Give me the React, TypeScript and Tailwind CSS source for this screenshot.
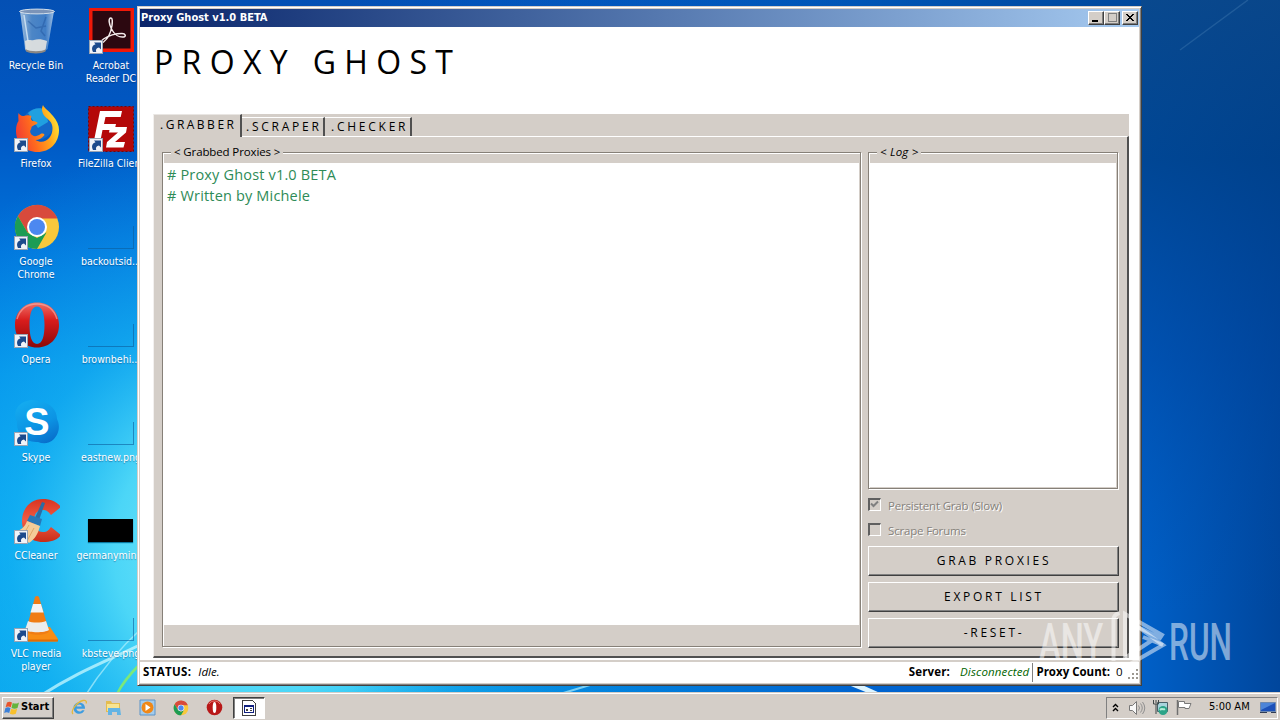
import type { ReactNode } from "react"

const RAISED = "border border-t-white border-l-white border-r-[#404040] border-b-[#404040] shadow-[inset_-1px_-1px_0_#808080]"

/* ---------- Desktop icons ---------- */

function Shortcut() {
  return (
    <g>
      <rect x="2.500" y="33.500" width="13" height="13" fill="#f0f3f8" stroke="#9aa4b4" />
      <path d="M6 45c-2-4-.5-7 2.500-7.800L7 35.500h7v7l-2-2c-2.500.6-3.600 2-2.800 4.500z" fill="#1c4a8c" />
    </g>
  )
}

function Icon({ children, shortcut = true }: { children: ReactNode; shortcut?: boolean }) {
  return (
    <svg width="48" height="48" viewBox="0 0 48 48" className="shrink-0">
      {children}
      {shortcut && <Shortcut />}
    </svg>
  )
}

function RecycleBin() {
  return (
    <Icon shortcut={false}>
      <defs>
        <linearGradient id="bin" x1="0" x2="1" y1="0" y2="0">
          <stop offset="0" stopColor="#b4cce4" stopOpacity="0.9" />
          <stop offset="0.35" stopColor="#6c9ccc" stopOpacity="0.7" />
          <stop offset="0.75" stopColor="#5a90cc" stopOpacity="0.7" />
          <stop offset="1" stopColor="#b4d0ec" stopOpacity="0.9" />
        </linearGradient>
      </defs>
      <path d="M8 4l5 38c.5 3 21 3 22.500 0L42 4z" fill="url(#bin)" />
      <path d="M13 34c3-2 6 0 9-1s8-1 13 1l-1.500 9c-3 3-18 3-20 0z" fill="#e6e4e0" opacity="0.9" />
      <path d="M13.500 42c4 3 17 3 20.500 0l-.5 2.500c-4 2.500-15 2.500-19.500 0z" fill="#8a8784" />
      <path d="M16 14l8 7 10-2M34 10l-5 14 4 5" fill="none" stroke="#2458a0" strokeWidth="1.500" opacity="0.5" />
      <path d="M12 8l4 26" stroke="#dcecf8" strokeWidth="1.500" opacity="0.8" />
      <ellipse cx="25" cy="4.500" rx="17.500" ry="2.400" fill="#7c94b8" stroke="#d4e0ec" />
    </Icon>
  )
}

function Acrobat() {
  return (
    <Icon>
      <rect x="2" y="1" width="45" height="44" fill="#f01808" />
      <rect x="5.500" y="4" width="38" height="37.500" fill="#2c0810" />
      <path
        d="M24 11c-3 0-2 6 .5 11 3 6 8 8.500 12 8 3-.5 2-3.500-1.500-3.500-6 0-14 2.500-18.500 5.500-3.500 2.500-3 5 0 3 4-3 7.500-10 8.500-16.500.5-4 .5-7.500-1-7.500z"
        fill="none"
        stroke="#f4ecec"
        strokeWidth="1.500"
      />
    </Icon>
  )
}

function Firefox() {
  return (
    <Icon>
      <defs>
        <linearGradient id="fx" x1="0" x2="1" y1="0.6" y2="0.3">
          <stop offset="0" stopColor="#f03c34" />
          <stop offset="0.35" stopColor="#ff6a1e" />
          <stop offset="0.7" stopColor="#ffa81c" />
          <stop offset="1" stopColor="#ffe838" />
        </linearGradient>
      </defs>
      <circle cx="26" cy="19" r="15.500" fill="#1468c8" />
      <path d="M16 8c5-5 12-6 18-3l2 12-10 6z" fill="#20a0e0" />
      <path
        d="M31 0c1 3 6 6 10 11s6 9 6 14c0 13-9 22-21.500 22S4 38 4 26c0-5 1-8 2.500-10 0-3-.5-5 0-8 2 3 4 3 5 3 3-1 6-1 8 0-1 2-1 4 1 5 2 0 5 1 5 2s-4 2-6 4c0 3-2 3-1 6 2 4 6 4 10 1 2-1 4 0 4 1-2 3-6 5-9 5 8 5 17-1 17-12 0-6-4-8-8-12-3-4-3-8-1.500-11z"
        fill="url(#fx)"
      />
    </Icon>
  )
}

function FileZilla() {
  return (
    <Icon>
      <rect x="1.500" y="1.500" width="45" height="45" fill="#b40808" stroke="#7c0404" strokeDasharray="2 2" />
      <path d="M13 6h22l-1.300 6H18.500l-1.500 7h12L27.600 25H15.500L13 38H6.500z" fill="#fff" />
      <path d="M23 22h17l-1 5.500L28 37h10l-1.500 5.500H19l1-5.500 11-9.500h-9z" fill="#fff" />
    </Icon>
  )
}

function ChromeShape() {
  return (
    <g>
      <circle cx="25" cy="24" r="22" fill="#f8c83c" />
      <path d="M5.900 13A22 22 0 0 1 45.500 15.500H25L15.500 29.500z" fill="#d84a3c" />
      <path d="M5.900 13A22 22 0 0 0 25 46l9.500-16.500-9.500 5.500-9.500-5.500z" fill="#1c9c54" />
      <circle cx="25" cy="24" r="10" fill="#fff" />
      <circle cx="25" cy="24" r="8" fill="#4c88f0" />
    </g>
  )
}

function OperaShape() {
  return (
    <g>
      <defs>
        <linearGradient id="op" x1="0" x2="0" y1="0" y2="1">
          <stop offset="0" stopColor="#f07068" />
          <stop offset="0.4" stopColor="#d81c1c" />
          <stop offset="1" stopColor="#8c0808" />
        </linearGradient>
      </defs>
      <path
        fillRule="evenodd"
        d="M25 1.500C38 1.500 47 11 47 24S38 46.500 25 46.500 3 37 3 24 12 1.500 25 1.500zM25 5.500c-5.500 0-7.500 8-7.500 18.500S19.500 43 25 43s7.500-8.500 7.500-19S30.500 5.500 25 5.500z"
        fill="url(#op)"
      />
      <path d="M5 18C8 8 15 3 25 3s17 5 20 15" fill="none" stroke="#f8b4ac" strokeWidth="1.500" opacity="0.6" />
    </g>
  )
}

function Skype() {
  return (
    <Icon>
      <defs>
        <linearGradient id="sk" x1="0.2" x2="0.7" y1="0" y2="1">
          <stop offset="0" stopColor="#14acf0" />
          <stop offset="0.6" stopColor="#0c94e4" />
          <stop offset="1" stopColor="#0870cc" />
        </linearGradient>
      </defs>
      <path d="M15 2c5-2 10-1 13 1 10 0 17 8 17 17 4 8 1 16-3 20-5 5-11 5-16 3C12 44 4 34 5 23 0 13 6 4 15 2z" fill="url(#sk)" />
      <text x="25" y="36" fontSize="38" fontWeight="700" fill="#fff" textAnchor="middle" fontFamily="Liberation Sans, sans-serif">
        S
      </text>
    </Icon>
  )
}

function CCleaner() {
  return (
    <Icon>
      <defs>
        <linearGradient id="cc" x1="0" x2="0" y1="0" y2="1">
          <stop offset="0" stopColor="#d83420" />
          <stop offset="0.5" stopColor="#f05c44" />
          <stop offset="1" stopColor="#c82c18" />
        </linearGradient>
      </defs>
      <path
        d="M49 10l-10 8c-3-4-5-5-8-5-7 0-9 5-9 11s3 11 9 11c4 0 5-1 8-5l10 8c-4 5-10 7-18 7C18 45 10 36 10 24S18 2 31 2c8 0 14 3 18 8z"
        fill="url(#cc)"
      />
      <path d="M30 5l3 1-6 17-4-2z" fill="#2c6ca4" />
      <path d="M18 18l12 4-2 7-13-5z" fill="#2878b8" />
      <path d="M15 24l13 5c-2 8-5 13-11 17l-4-4-6 2-4-9c6-2 10-5 12-11z" fill="#f4cc98" />
      <path d="M17 28l-7 12M22 31l-7 13" stroke="#e0a868" />
    </Icon>
  )
}

function Vlc() {
  return (
    <Icon>
      <path d="M14 32h24l8 12c0 2-1 2.500-2 2.500H10c-2 0-3-1-2-3z" fill="#f88c14" />
      <path d="M10 44.500h36v2H10z" fill="#e06c04" />
      <path d="M23 2c1-1.500 3-1.500 4 0l10 34c-2 5-20 5-23 0z" fill="#f07c14" />
      <path d="M21 9h8l2.500 8.500H18.500z" fill="#f4f4f4" />
      <path d="M16 26c4 2 13 2 18 0l3 9c-4 3-20 3-24 0z" fill="#ececec" />
    </Icon>
  )
}

function Thumb({ black }: { black?: boolean }) {
  return (
    <div className="flex h-12 w-12 shrink-0 items-end pl-px pb-[2px]">
      {black ? (
        <div className="mb-px h-[23px] w-[45px] bg-black shadow-[0_1px_1px_#0878a0]" />
      ) : (
        <div className="h-[23px] w-[46px] border-r border-b border-[#0b5d9c]/60" />
      )}
    </div>
  )
}

function DesktopItem({ label, children }: { label: string; children: ReactNode }) {
  return (
    <div className="flex h-[98px] flex-col items-center pt-[7px]">
      {children}
      <span className="mt-[4px] text-center text-[10.5px] leading-[13px] whitespace-pre text-white [text-shadow:0_1px_1px_rgba(0,30,80,0.4)]">
        {label}
      </span>
    </div>
  )
}

function Wallpaper() {
  return (
    <svg className="absolute inset-0" width="1280" height="720" viewBox="0 0 1280 720">
      <defs>
        <linearGradient id="sky" x1="0" x2="0" y1="0" y2="1">
          <stop offset="0" stopColor="#0450b4" />
          <stop offset="0.18" stopColor="#0058c4" />
          <stop offset="0.35" stopColor="#0074dc" />
          <stop offset="0.52" stopColor="#0090ea" />
          <stop offset="0.75" stopColor="#00a0f0" />
          <stop offset="1" stopColor="#04a4ec" />
        </linearGradient>
        <radialGradient id="glow" gradientUnits="userSpaceOnUse" cx="260" cy="550" r="430">
          <stop offset="0" stopColor="#8cf0fc" />
          <stop offset="0.34" stopColor="#54dcf8" stopOpacity="0.9" />
          <stop offset="0.58" stopColor="#20bcf4" stopOpacity="0.5" />
          <stop offset="1" stopColor="#10a0f0" stopOpacity="0" />
        </radialGradient>
        <linearGradient id="fade" x1="0" x2="1" y1="0" y2="0">
          <stop offset="0" stopColor="#0060cc" stopOpacity="0" />
          <stop offset="0.55" stopColor="#0064d0" />
          <stop offset="0.85" stopColor="#0060c8" />
          <stop offset="1" stopColor="#00469c" />
        </linearGradient>
        <linearGradient id="dim" x1="0" x2="0" y1="0" y2="1">
          <stop offset="0" stopColor="#0a4688" stopOpacity="0.9" />
          <stop offset="0.22" stopColor="#004088" stopOpacity="0.8" />
          <stop offset="0.5" stopColor="#00449c" stopOpacity="0.5" />
          <stop offset="0.85" stopColor="#0050b0" stopOpacity="0" />
        </linearGradient>
        <linearGradient id="top" x1="0" x2="1" y1="0" y2="0">
          <stop offset="0" stopColor="#004ca8" stopOpacity="0" />
          <stop offset="1" stopColor="#00489c" />
        </linearGradient>
      </defs>
      <rect width="1280" height="720" fill="url(#sky)" />
      <rect width="700" height="720" fill="url(#glow)" />
      <rect x="350" width="930" height="720" fill="url(#fade)" />
      <rect x="500" width="641" height="7" fill="url(#top)" />
      <rect x="1141" width="139" height="720" fill="url(#dim)" />
      <path d="M1180 50L1248 0" stroke="#4c84b8" strokeWidth="1.500" opacity="0.35" />
      <path d="M40 696C80 670 110 660 150 640" stroke="#c8f8ff" strokeWidth="3" fill="none" opacity="0.75" />
      <path d="M85 696C100 672 118 650 142 628" stroke="#b0f0fc" strokeWidth="1.500" fill="none" opacity="0.7" />
      <path d="M117 694C123 682 130 674 140 664" stroke="#84ec6c" strokeWidth="2.500" fill="none" opacity="0.9" />
      <path d="M846 684h14l20 9h-12z" fill="#dcf4ff" />
      <path d="M560 694l30-9" stroke="#7cd0f4" strokeWidth="2" />
    </svg>
  )
}

/* ---------- Window ---------- */

function CaptionButton({ children }: { children: ReactNode }) {
  return (
    <div className={`h-[14px] w-4 bg-[#d4cec8] ${RAISED}`}>
      <svg width="14" height="12" viewBox="0 0 14 12" shapeRendering="crispEdges">
        {children}
      </svg>
    </div>
  )
}

function Tab({ label, active }: { label: string; active?: boolean }) {
  return (
    <div
      className={
        active
          ? "h-[23px] w-[89px] border-t border-l border-r-2 border-t-white/50 border-l-white/70 border-r-[#505050] bg-[#d4cec8] pl-[6px] leading-[17px]"
          : "mt-[3px] h-[19px] w-[83px] border-t border-r-2 border-t-white border-r-[#505050] pl-[4px] leading-[15px] last:w-[87px] last:pl-[6px]"
      }
    >
      <span className={active ? "text-[12px] tracking-[2.5px]" : "text-[12px] tracking-[2.75px]"}>{label}</span>
    </div>
  )
}

function GroupBox({ title, children, className }: { title: ReactNode; children?: ReactNode; className: string }) {
  return (
    <div className={`relative border border-[#868078] shadow-[inset_1px_1px_0_#fff,1px_1px_0_#fff] ${className}`}>
      <div className="absolute -top-[9px] left-[8px] h-4 bg-[#d4cec8] px-[3px] text-[11.5px] leading-4 tracking-[-0.12px]">{title}</div>
      {children}
    </div>
  )
}

function Check({ label, checked }: { label: string; checked?: boolean }) {
  return (
    <div className="flex h-[25px] items-start">
      <div className="h-[13px] w-[13px] border-t-2 border-l-2 border-r border-b border-t-[#606060] border-l-[#606060] border-r-white border-b-white">
        {checked && (
          <svg width="9" height="9" viewBox="0 0 9 9">
            <path d="M1 3.500l2.500 2.500L8 1.500" fill="none" stroke="#808080" strokeWidth="2" />
          </svg>
        )}
      </div>
      <span className="ml-[7px] text-[11.5px] leading-[16px] tracking-[-0.18px] text-[#86827c] [text-shadow:1px_1px_0_#fff]">{label}</span>
    </div>
  )
}

function PushButton({ label }: { label: string }) {
  return (
    <button className={`flex h-[30px] w-[251px] items-center justify-center bg-[#d4cec8] pl-px text-[12px] tracking-[2.7px] ${RAISED}`}>
      {label}
    </button>
  )
}

function AppWindow() {
  return (
    <div className="absolute left-[137px] top-[6px] flex h-[680px] w-[1005px] flex-col border border-t-[#d4cec8] border-l-[#d4cec8] border-r-[#404040] border-b-[#404040] bg-[#d4cec8] p-[2px] font-['Open_Sans','Noto_Sans',sans-serif] text-black shadow-[inset_1px_1px_0_#fff,inset_-1px_-1px_0_#808080]">
      {/* Title bar */}
      <div className="flex h-[18px] shrink-0 items-center justify-between bg-linear-to-r from-[#0a246a] to-[#a6caf0] pl-px pr-px">
        <span className="font-['DejaVu_Sans_Condensed','DejaVu_Sans',sans-serif] text-[11px] font-bold text-white">
          Proxy Ghost v1.0 BETA
        </span>
        <div className="flex">
          <CaptionButton>
            <path d="M3 8h6v2H3z" />
          </CaptionButton>
          <CaptionButton>
            <path d="M3.500 1.500h8v8h-8z" fill="none" stroke="#808080" />
            <path d="M3 1h9v1H3z" fill="#808080" />
          </CaptionButton>
          <div className="ml-[2px]">
            <CaptionButton>
              <path d="M3 2h2v1h1v1h2V3h1V2h2v1h-1v1H9v1H8v1h1v1h1v1h1v1H9V8H8V7H6v1H5v1H3V8h1V7h1V6h1V5H5V4H4V3H3z" />
            </CaptionButton>
          </div>
        </div>
      </div>

      <div className="flex min-h-0 flex-1 flex-col bg-white">
        <h1 className="h-[87px] pl-[14px] pt-[11px] text-[32px] leading-[48px] tracking-[8.35px]">PROXY GHOST</h1>

        {/* Tabs */}
        <div className="ml-[13px] h-[544px] w-[976px] bg-[#d4cec8]">
          <div className="relative flex h-[22px]">
            <Tab label=".GRABBER" active />
            <Tab label=".SCRAPER" />
            <Tab label=".CHECKER" />
          </div>
          <div className="flex h-[522px] border-t border-l border-r-2 border-b-2 border-t-white border-l-white/70 border-r-[#505050] border-b-[#505050] pl-[8px] pt-[15px]">
            <GroupBox title="< Grabbed Proxies >" className="h-[495px] w-[699px] pt-[10px]">
              <div className="ml-px mr-px h-[462px] bg-white pl-[3px] text-[14.5px] leading-[21px] tracking-[0.17px] text-[#2e8b57]">
                <p className="pt-px"># Proxy Ghost v1.0 BETA</p>
                <p># Written by Michele</p>
              </div>
            </GroupBox>
            <div className="ml-[7px] flex flex-col">
              <GroupBox title={<i className="tracking-[0.2px]">&lt; Log &gt;</i>} className="h-[337px] w-[250px] pt-[10px]">
                <div className="ml-px mr-px h-[324px] bg-white" />
              </GroupBox>
              <div className="mt-[9px]">
                <Check label="Persistent Grab (Slow)" checked />
                <Check label="Scrape Forums" />
              </div>
              <div className="-mt-[2px] flex flex-col gap-[6px]">
                <PushButton label="GRAB PROXIES" />
                <PushButton label="EXPORT LIST" />
                <PushButton label="-RESET-" />
              </div>
            </div>
          </div>
        </div>

        {/* Status bar */}
        <div className="mt-[2px] flex h-[22px] items-center border-t-2 border-[#d4cec8] pl-[3px] text-[11.5px]">
          <b className="tracking-[0.35px]">STATUS:</b>
          <i className="ml-[7px]">Idle.</i>
          <b className="ml-auto tracking-[0.15px]">Server:</b>
          <i className="ml-[10px] tracking-[0.15px] text-[#006400]">Disconnected</i>
          <span className="mx-[3px] h-[19px] w-px bg-[#808080]" />
          <b>Proxy Count:</b>
          <span className="ml-[6px] w-[10px]">0</span>
          <svg width="13" height="18" viewBox="0 0 13 18" shapeRendering="crispEdges" className="self-end">
            <path d="M10 5h2v2h-2zM6 9h2v2H6zM10 9h2v2h-2zM2 13h2v2H2zM6 13h2v2H6zM10 13h2v2h-2z" fill="#9c9890" />
          </svg>
        </div>
      </div>
    </div>
  )
}

/* ---------- Taskbar ---------- */

function Taskbar() {
  return (
    <div className="relative flex h-[28px] items-center border-t border-[#d4cec8] bg-[#d4cec8] pl-[2px] pr-[2px] pt-[2px] text-[11px] text-black shadow-[inset_0_1px_0_#fff]">
      <button className={`flex h-[22px] w-[52px] items-center gap-[1px] pl-[1px] font-bold ${RAISED}`}>
        <svg width="16" height="16" viewBox="0 0 16 16">
          <path d="M3 2.500c2-1.300 3.500-1 5 0L6.800 7.300C5 6.300 3.500 6.300 1.600 7.300z" fill="#e8542c" />
          <path d="M8.700 2.900c2 1 3.800 1 6.300-.5L13.500 8c-2 1-3.800 1-6 0z" fill="#64b43c" />
          <path d="M1.300 8.200c2-1.200 3.500-1 5.200 0L5.200 13c-1.700-1-3.200-1-5 0z" fill="#3c80d8" />
          <path d="M7.200 8.700c2 1 3.800 1 6 0l-1.400 5c-2 1-3.800 1-5.900 0z" fill="#f8c02c" />
        </svg>
        <span className="text-[11px]">Start</span>
      </button>
      <div className="ml-[17px] flex items-center gap-[17px]">
        <svg width="17" height="17" viewBox="0 0 17 17">
          <path d="M14 9.800H5.500c.3 3 4.500 3.500 5.500 1.500h2.600C11 17 2.500 15.500 2.500 9 2.500 1.500 14.500 1.500 14 9.800zM5.600 7.500h5.200C10.500 4.800 6 4.800 5.600 7.500z" fill="#3c9ce0" />
          <path d="M2 15C-1 12 6 3 12 1.500c3-.5 4 1 3 3" fill="none" stroke="#e4b83c" strokeWidth="1.300" />
        </svg>
        <svg width="17" height="17" viewBox="0 0 17 17">
          <path d="M1 2h5l1 2h8v9H1z" fill="#e4bc50" />
          <path d="M2 5h12v7H2z" fill="#f8e490" />
          <path d="M3 9h12l1 7h-4v-3H7v3H3z" fill="#64b4e4" />
        </svg>
        <svg width="17" height="17" viewBox="0 0 17 17">
          <path d="M1 1h15v15H1z" fill="#a4ccec" stroke="#5c94c8" />
          <circle cx="8.500" cy="8.500" r="6" fill="#f08818" />
          <path d="M6.500 5l5 3.500-5 3.500z" fill="#fff" />
        </svg>
        <svg width="16" height="16" viewBox="1 0 48 48">
          <ChromeShape />
        </svg>
        <svg width="17" height="17" viewBox="0 0 17 17">
          <circle cx="8.500" cy="8.500" r="7.800" fill="#b81818" />
          <path d="M3 5c2-4 9-4 11 0" stroke="#ec8078" fill="none" />
          <ellipse cx="8.500" cy="8.500" rx="1.800" ry="5.500" fill="#fff" />
        </svg>
      </div>
      <div className="ml-[10px] flex h-[22px] w-8 items-center justify-center border border-t-[#404040] border-l-[#404040] border-r-white border-b-white bg-white shadow-[inset_1px_1px_0_#808080]">
        <svg width="14" height="16" viewBox="0 0 14 16" shapeRendering="crispEdges">
          <path d="M.5.500h10l3 3v12H.5z" fill="#fff" stroke="#404040" />
          <path d="M2.500 5.500h9v7h-9z" fill="#fff" stroke="#102080" />
          <path d="M2 5h10v2H2z" fill="#102080" />
          <path d="M4 9h2v2H4zM8 8h2v1H8zM8 10h2v1H8z" fill="#404040" />
        </svg>
      </div>

      {/* Tray */}
      <div className="ml-auto flex h-[22px] w-[172px] items-center border border-t-[#808080] border-l-[#808080] border-r-white border-b-white pl-[5px]">
        <svg width="8" height="10" viewBox="0 0 8 10">
          <path d="M1 4L3.500 1.500 6 4M1 8L3.500 5.500 6 8" fill="none" stroke="#000" strokeWidth="1.400" />
        </svg>
        <svg width="18" height="16" viewBox="0 0 18 16" className="ml-[8px]">
          <path d="M1.500 5.500h3l4-4v13l-4-4h-3z" fill="#f8f8f8" stroke="#787878" />
          <path d="M10.500 5.500q2 2.500 0 5M12.500 3.500q3.500 4.500 0 9M14.500 2q4.500 6 0 12" fill="none" stroke="#909090" />
        </svg>
        <svg width="17" height="17" viewBox="0 0 17 17" className="ml-[6px]">
          <path d="M5.500 3.500h10v9h-10z" fill="#a8d4dc" stroke="#486068" />
          <path d="M1.500 1v4h5V1M4 5v10M4 1v3" fill="none" stroke="#404848" />
          <circle cx="11" cy="11.500" r="4.500" fill="#2ca488" />
          <path d="M8 11c2-2 3 0 5-1" stroke="#b4ecd8" strokeWidth="2" fill="none" />
        </svg>
        <svg width="17" height="17" viewBox="0 0 17 17" className="ml-[7px]">
          <path d="M1.500 1v15" stroke="#707070" strokeWidth="1.500" />
          <path d="M2.500 2.500h6v2h6.500l-2 5H9v-1H2.500z" fill="#fff" stroke="#787878" />
        </svg>
        <span className="ml-[16px] text-[11px] whitespace-nowrap">5:00 AM</span>
        <svg width="16" height="14" viewBox="0 0 16 14" className="ml-auto mr-px">
          <path d="M.5 1.500h15v9H.5z" fill="#1c50b8" stroke="#6c88b0" />
          <path d="M1 2h14L1 9z" fill="#4c84d8" />
          <path d="M0 11h7v1H0zM11 11h5v1h-5z" fill="#303c54" />
        </svg>
      </div>
    </div>
  )
}

function Watermark() {
  return (
    <svg className="absolute left-[1030px] top-[600px]" width="220" height="80" viewBox="0 0 220 80">
      <g fill="#fff" fillOpacity="0.5" fontFamily="Roboto, sans-serif" fontSize="51" fontWeight="500">
        <text transform="translate(9 59.500) scale(0.640 1)">ANY</text>
        <text transform="translate(139 59.500) scale(0.620 1)">RUN</text>
      </g>
      <g fill="none" stroke="#fff" strokeOpacity="0.5" strokeWidth="4">
        <path d="M83.500 61V20c0-3 2-6 6-7" />
        <path d="M95 58V14L132 35l-2 3-22-11" />
        <path d="M108 27l25 18-38 22" />
        <path d="M133 45l-20-8M95 58l26-17" />
      </g>
    </svg>
  )
}

const programs = [
  { label: "Recycle Bin", icon: <RecycleBin /> },
  { label: "Firefox", icon: <Firefox /> },
  { label: "Google\nChrome", icon: <Icon><ChromeShape /></Icon> },
  { label: "Opera", icon: <Icon><OperaShape /></Icon> },
  { label: "Skype", icon: <Skype /> },
  { label: "CCleaner", icon: <CCleaner /> },
  { label: "VLC media\nplayer", icon: <Vlc /> },
]

const files = [
  { label: "Acrobat\nReader DC", icon: <Acrobat /> },
  { label: "FileZilla Client", icon: <FileZilla /> },
  { label: "backoutsid...", icon: <Thumb /> },
  { label: "brownbehi...", icon: <Thumb /> },
  { label: "eastnew.png", icon: <Thumb /> },
  { label: "germanymin...", icon: <Thumb black /> },
  { label: "kbsteve.png", icon: <Thumb /> },
]

export default function App() {
  return (
    <div className="relative flex h-[720px] w-[1280px] flex-col overflow-hidden bg-[#0058c4] font-['DejaVu_Sans_Condensed','DejaVu_Sans',sans-serif]">
      <Wallpaper />
      <div className="relative flex h-[692px]">
        <div className="-ml-px w-[74px]">
          {programs.map((p) => (
            <DesktopItem key={p.label} label={p.label}>
              {p.icon}
            </DesktopItem>
          ))}
        </div>
        <div className="w-[76px]">
          {files.map((f) => (
            <DesktopItem key={f.label} label={f.label}>
              {f.icon}
            </DesktopItem>
          ))}
        </div>
        <AppWindow />
      </div>
      <Taskbar />
      <Watermark />
    </div>
  )
}
